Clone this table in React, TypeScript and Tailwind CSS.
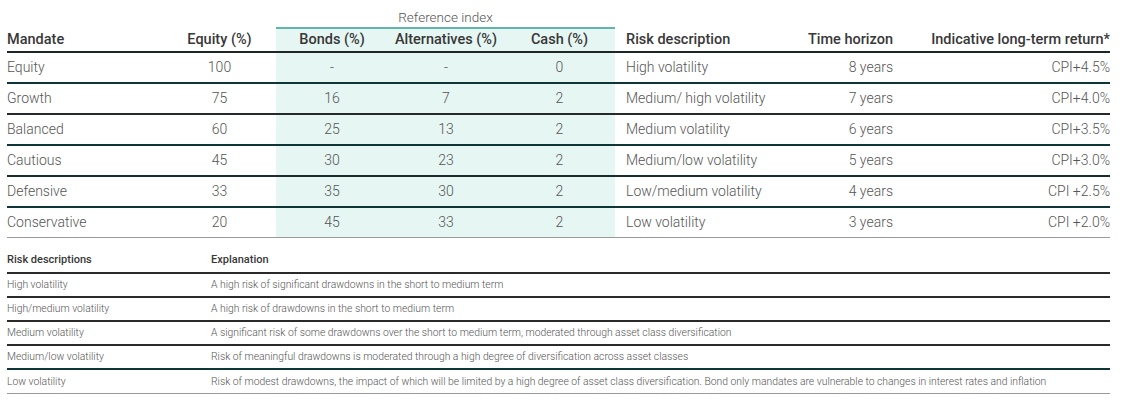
import React from "react";

const rows = [
  { m: "Equity", e: "100", b: "-", a: "-", c: "0", r: "High volatility", t: "8 years", ret: "CPI+4.5%", line: "border-[#0f3636]" },
  { m: "Growth", e: "75", b: "16", a: "7", c: "2", r: "Medium/ high volatility", t: "7 years", ret: "CPI+4.0%", line: "border-[#262a2a]" },
  { m: "Balanced", e: "60", b: "25", a: "13", c: "2", r: "Medium volatility", t: "6 years", ret: "CPI+3.5%", line: "border-[#0f3636]" },
  { m: "Cautious", e: "45", b: "30", a: "23", c: "2", r: "Medium/low volatility", t: "5 years", ret: "CPI+3.0%", line: "border-[#1b2c2c]" },
  { m: "Defensive", e: "33", b: "35", a: "30", c: "2", r: "Low/medium volatility", t: "4 years", ret: "CPI +2.5%", line: "border-[#0f3636]" },
  { m: "Conservative", e: "20", b: "45", a: "33", c: "2", r: "Low volatility", t: "3 years", ret: "CPI +2.0%", line: "" },
];

const risks = [
  { r: "High volatility", x: "A high risk of significant drawdowns in the short to medium term", line: "border-[#2a2a2a]" },
  { r: "High/medium volatility", x: "A high risk of drawdowns in the short to medium term", line: "border-[#2a2a2a]" },
  { r: "Medium volatility", x: "A significant risk of some drawdowns over the short to medium term, moderated through asset class diversification", line: "border-[#2a2a2a]" },
  { r: "Medium/low volatility", x: "Risk of meaningful drawdowns is moderated through a high degree of diversification across asset classes", line: "border-[#0f3636]" },
  { r: "Low volatility", x: "Risk of modest drawdowns, the impact of which will be limited by a high degree of asset class diversification. Bond only mandates are vulnerable to changes in interest rates and inflation", line: "" },
];

export default function App() {
  return (
    <div className="w-[1124px] h-[409px] bg-white pl-[7px] pr-[14px]" style={{ fontFamily: "Roboto, 'Liberation Sans', sans-serif" }}>
      {/* Upper table */}
      <div className="w-[1103px]">
        {/* Reference index super header */}
        <div className="flex h-[29px]">
          <div className="w-[269px]" />
          <div className="w-[339px] border-b-2 border-[#62b5aa] flex items-start justify-center pt-[7px] text-[13.5px] font-light text-[#555]">
            Reference index
          </div>
        </div>
        {/* Header row */}
        <div className="flex h-[24px] border-b-2 border-[#1e2626] text-[14.5px] font-medium text-[#383838] items-center">
          <div className="w-[156px] h-full flex items-center">Mandate</div>
          <div className="w-[113px] h-full flex items-center justify-center">Equity (%)</div>
          <div className="w-[112px] h-full flex items-center justify-center bg-[#e6f6f3]">Bonds (%)</div>
          <div className="w-[116px] h-full flex items-center justify-center bg-[#e6f6f3]">Alternatives (%)</div>
          <div className="w-[111px] h-full flex items-center justify-center bg-[#e6f6f3]">Cash (%)</div>
          <div className="w-[190px] h-full flex items-center pl-[11px]">Risk description</div>
          <div className="w-[88px] h-full flex items-center justify-end">Time horizon</div>
          <div className="flex-1 h-full flex items-center justify-end">Indicative long-term return*</div>
        </div>
        {rows.map((row, i) => (
          <div
            key={i}
            className={`flex text-[14px] font-light text-[#555] ${i === rows.length - 1 ? "border-b border-[#9a9a9a] h-[30px]" : `h-[31px] border-b-2 ${row.line}`}`}
          >
            <div className="w-[156px] h-full flex items-center">{row.m}</div>
            <div className="w-[113px] h-full flex items-center justify-center">{row.e}</div>
            <div className="w-[112px] h-full flex items-center justify-center bg-[#e6f6f3]">{row.b}</div>
            <div className="w-[116px] h-full flex items-center justify-center bg-[#e6f6f3]">{row.a}</div>
            <div className="w-[111px] h-full flex items-center justify-center bg-[#e6f6f3]">{row.c}</div>
            <div className="w-[190px] h-full flex items-center pl-[11px]">{row.r}</div>
            <div className="w-[88px] h-full flex items-center justify-end">{row.t}</div>
            <div className="flex-1 h-full flex items-center justify-end">{row.ret}</div>
          </div>
        ))}
      </div>

      {/* Lower table */}
      <div className="w-[1103px] mt-[12px]">
        <div className="flex h-[24px] border-b-2 border-[#2a2a2a] text-[11px] font-medium text-[#383838] items-end pb-[4px]">
          <div className="w-[204px]">Risk descriptions</div>
          <div className="flex-1">Explanation</div>
        </div>
        {risks.map((r, i) => (
          <div
            key={i}
            className={`flex h-[24px] items-center text-[10.35px] font-light text-[#555] ${i === risks.length - 1 ? "border-b border-[#9a9a9a]" : `border-b-2 ${r.line}`}`}
          >
            <div className="w-[204px]">{r.r}</div>
            <div className="flex-1">{r.x}</div>
          </div>
        ))}
      </div>
    </div>
  );
}
